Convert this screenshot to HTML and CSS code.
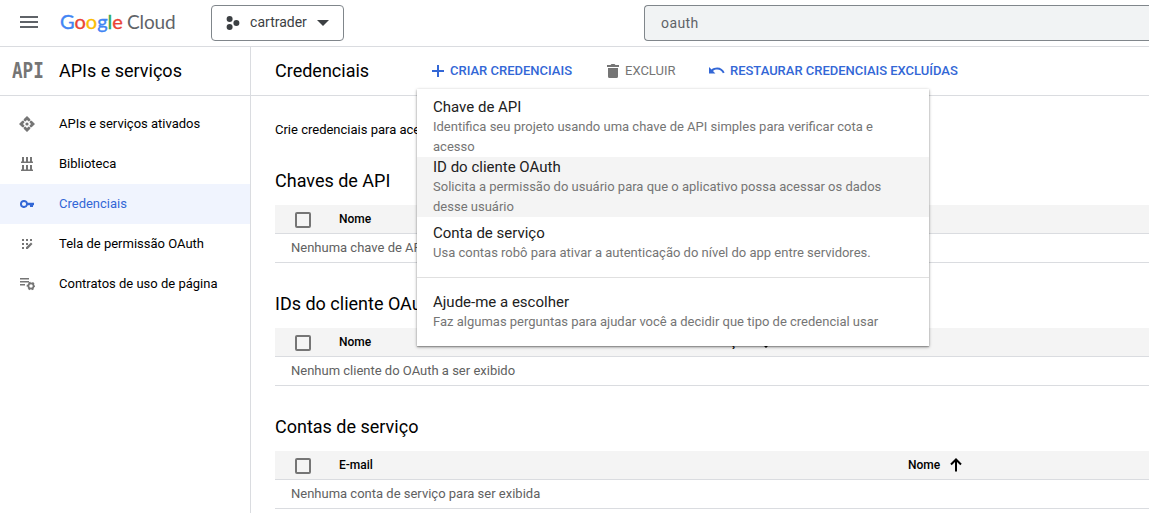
FILE: index.html
```html
<!DOCTYPE html>
<html lang="pt-BR">
<head>
<meta charset="utf-8">
<title>Credenciais – APIs e serviços</title>
<link rel="stylesheet" href="styles.css">
</head>
<body>
<header class="topbar">
  <svg class="burger" width="18" height="12" viewBox="0 0 18 12"><path d="M0 0h18v2H0zM0 5h18v2H0zM0 10h18v2H0z"/></svg>
  <div class="logo"><span class="google"><i class="b">G</i><i class="r">o</i><i class="y">o</i><i class="b">g</i><i class="g">l</i><i class="r">e</i></span><span class="cloud">Cloud</span></div>
  <button class="project">
    <svg width="14" height="14" viewBox="0 0 14 14"><circle cx="3.6" cy="3" r="3"/><circle cx="3.6" cy="11" r="3"/><circle cx="10.4" cy="7" r="3"/></svg>
    <span>cartrader</span>
    <svg class="caret" width="12" height="6" viewBox="0 0 12 6"><path d="M0 0h12L6 6z"/></svg>
  </button>
  <div class="search">oauth</div>
</header>
<div class="layout">
  <aside class="sidebar">
    <div class="product"><span class="api">API</span><span class="product-name">APIs e serviços</span></div>
    <nav class="nav">
      <a class="nav-item"><svg width="16" height="16" viewBox="0 0 16 16"><circle cx="8" cy="8" r="1.600"/><path d="M8 0l3.300 3.300v1.200L9.700 5.600 8 4 6.300 5.600 4.700 4.500V3.300zM8 16l3.300-3.300v-1.200L9.700 10.400 8 12l-1.700-1.600-1.600 1.100v1.200zM0 8l3.300-3.300h1.200l1.100 1.600L4 8l1.600 1.700-1.100 1.600H3.300zM16 8l-3.300-3.300h-1.200l-1.100 1.600L12 8l-1.600 1.700 1.100 1.600h1.200z"/></svg><span>APIs e serviços ativados</span></a>
      <a class="nav-item"><svg width="16" height="16" viewBox="0 0 16 16"><path d="M3 1h2v4.500h2V1h2v4.500h2V1h2v4.500h1V7H2V5.500h1zM3 9h2v4.500h2V9h2v4.500h2V9h2v4.500h1V15H2v-1.500h1z"/></svg><span>Biblioteca</span></a>
      <a class="nav-item active"><svg width="16" height="16" viewBox="0 0 16 16"><path fill-rule="evenodd" d="M5 4a4 4 0 1 0 3.800 5.200H11V11h3V9.200h1V6.800H8.800A4 4 0 0 0 5 4zm0 1.900a2.100 2.100 0 1 1 0 4.200 2.100 2.100 0 0 1 0-4.200z"/></svg><span>Credenciais</span></a>
      <a class="nav-item"><svg width="16" height="16" viewBox="0 0 16 16"><path d="M3 3h2v2H3zM7 3h2v2H7zM11 3h2v2h-2zM3 7h2v2H3zM7 7h2v2H7zM3 11h2v2H3zM7 11.300L12 6.500 13.500 8l-4.800 5H7z"/></svg><span>Tela de permissão OAuth</span></a>
      <a class="nav-item"><svg width="16" height="16" viewBox="0 0 16 16"><path d="M1 2h9v1.600H1zM1 5h9v1.600H1zM1 8h5v1.600H1z"/><circle cx="12" cy="10" r="2.600" fill="none" stroke="#757575" stroke-width="1.700"/><circle cx="12" cy="10" r="3.700" fill="none" stroke="#757575" stroke-width="1.300" stroke-dasharray="2 1.875" stroke-dashoffset="1"/></svg><span>Contratos de uso de página</span></a>
    </nav>
  </aside>
  <main class="main">
    <div class="actionbar">
      <h1>Credenciais</h1>
      <div class="create-wrap">
        <button class="action create"><svg width="12" height="12" viewBox="0 0 12 12"><path d="M5 0h2v5h5v2H7v5H5V7H0V5h5z"/></svg>CRIAR CREDENCIAIS</button>
        <div class="menu">
          <div class="menu-item"><b>Chave de API</b><p>Identifica seu projeto usando uma chave de API simples para verificar cota e acesso</p></div>
          <div class="menu-item hover"><b>ID do cliente OAuth</b><p>Solicita a permissão do usuário para que o aplicativo possa acessar os dados desse usuário</p></div>
          <div class="menu-item short"><b>Conta de serviço</b><p>Usa contas robô para ativar a autenticação do nível do app entre servidores.</p></div>
          <hr>
          <div class="menu-item short"><b>Ajude-me a escolher</b><p>Faz algumas perguntas para ajudar você a decidir que tipo de credencial usar</p></div>
        </div>
      </div>
      <button class="action delete"><svg width="12" height="14" viewBox="0 0 12 14"><path d="M0 1h3.500l1-1h3l1 1H12v2H0zM1 4h10v8.500Q11 14 9.500 14h-7Q1 14 1 12.500z"/></svg>EXCLUIR</button>
      <button class="action restore"><svg width="16" height="8" viewBox="0 0 16 8"><path d="M0 0l2.600 2.500C4 1.300 6 .6 8.200.6c3.400 0 6.200 2 7.400 5l-1.700.7C12.900 4 10.800 2.600 8.200 2.600c-1.600 0-3 .5-4.200 1.300L6.400 6.500H0z"/></svg>RESTAURAR CREDENCIAIS EXCLUÍDAS</button>
    </div>
    <div class="content">
      <p class="intro">Crie credenciais para ace</p>
      <section>
        <h2>Chaves de API</h2>
        <div class="thead"><span class="check"></span><span class="first">Nome</span></div>
        <div class="row">Nenhuma chave de API</div>
      </section>
      <section>
        <h2>IDs do cliente OAuth</h2>
        <div class="thead"><span class="check"></span><span class="first oauth">Nome</span><span>Data da criação</span><svg class="sort down" width="12" height="14" viewBox="0 0 12 14"><path d="M6 13.500V2M1 6.500L6 1.500l5 5"/></svg></div>
        <div class="row">Nenhum cliente do OAuth a ser exibido</div>
      </section>
      <section>
        <h2>Contas de serviço</h2>
        <div class="thead"><span class="check"></span><span class="first accounts">E-mail</span><span>Nome</span><svg class="sort" width="12" height="14" viewBox="0 0 12 14"><path d="M6 13.500V2M1 6.500L6 1.500l5 5"/></svg></div>
        <div class="row">Nenhuma conta de serviço para ser exibida</div>
      </section>
    </div>
  </main>
</div>
</body>
</html>
```
FILE: styles.css
```css
* { box-sizing: border-box; }
body { margin: 0; height: 513px; overflow: hidden; background: #fff; color: #000; font: 13px/20px Roboto, sans-serif; }
button { font: inherit; border: 0; background: none; padding: 0; display: flex; align-items: center; white-space: nowrap; }
h1, h2, p { margin: 0; font-weight: 400; }
svg { flex: none; fill: currentColor; }

.topbar { height: 47px; display: flex; align-items: center; border-bottom: 1px solid #dadce0; padding-left: 20px; }
.burger { color: #5f6368; margin-top: -2px; }
.logo { display: flex; align-items: baseline; margin: -3px 0 0 22px; width: 151px; font: 20px/28px Lato, sans-serif; white-space: nowrap; }
.logo i { font-style: normal; }
.google { width: 67px; -webkit-text-stroke: .35px; }
.cloud { color: #5f6368; font-size: 19px; letter-spacing: -.15px; }
.b { color: #4285f4; }
.r { color: #ea4335; }
.y { color: #fbbc04; }
.g { color: #34a853; }
.project { width: 133px; height: 36px; border: 1px solid #80868b; border-radius: 4px; padding-left: 14px; color: #3c4043; font-size: 14px; }
.project span { margin: -2px 0 0 10px; width: 57px; }
.caret { margin-left: 10px; }
.search { margin-left: 300px; flex: 1; height: 36px; border: 1px solid #80868b; border-right: 0; border-radius: 4px 0 0 4px; background: #f1f3f4; color: #5f6368; padding-left: 16px; font-size: 14px; line-height: 34px; letter-spacing: .4px; }

.layout { display: flex; height: 466px; }
.sidebar { width: 251px; border-right: 1px solid #dadce0; }
.product { height: 49px; display: flex; align-items: center; border-bottom: 1px solid #dadce0; padding-left: 12px; }
.api { width: 47px; color: #757575; font: bold 22px/20px "DejaVu Sans Mono", monospace; transform: scaleX(.8); transform-origin: left; }
.product-name { font-size: 18px; }
.nav { padding-top: 8px; }
.nav-item { height: 40px; display: flex; align-items: center; padding-left: 19px; }
.nav-item svg { color: #757575; margin-right: 24px; }
.nav-item.active { background: #f0f4fe; color: #3367d6; }
.nav-item.active svg { color: #3367d6; }

.main { flex: 1; min-width: 0; }
.actionbar { height: 49px; display: flex; align-items: center; border-bottom: 1px solid #dadce0; padding-left: 24px; }
h1 { font-size: 18px; width: 157px; }
.action { font-weight: 500; color: #3367d6; height: 36px; }
.create-wrap { position: relative; width: 175px; }
.create svg { margin-right: 6px; }
.delete { color: #757575; font-weight: 400; width: 102px; }
.delete svg { margin-right: 6px; }
.restore { letter-spacing: -.02px; }
.restore svg { margin-right: 5px; }

.menu { position: absolute; left: -15px; top: 36px; width: 512px; padding: 8px 0; background: #fff; box-shadow: 0 1px 3px rgba(0,0,0,.4), 0 1px 1px rgba(0,0,0,.2); z-index: 2; }
.menu-item { padding: 0 16px; }
.menu-item.short { padding: 6px 16px; }
.menu-item.hover { background: #f4f4f4; }
.menu-item b { display: block; font-weight: 400; font-size: 15px; color: #212121; }
.menu-item p { color: #757575; }
.menu hr { border: 0; height: 1px; margin: 8px 0; background: #e0e0e0; }

.content { padding: 24px 0 0 24px; }
.intro { margin-bottom: 29px; }
section { margin-bottom: 29px; }
h2 { font-size: 18px; line-height: 24px; margin-bottom: 12px; }
.thead { height: 29px; display: flex; align-items: center; background: #f4f4f4; border-bottom: 1px solid #dadce0; padding-left: 20px; font-size: 12px; font-weight: 500; }
.check { width: 16px; height: 16px; border: 2px solid #757575; border-radius: 2px; margin-top: 2px; }
.first { margin-left: 28px; }
.first.oauth { width: 327px; }
.first.accounts { width: 569px; }
.sort { margin-left: 10px; fill: none; stroke: #000; stroke-width: 2; }
.sort.down { transform: rotate(180deg); margin-top: -3px; }
.row { height: 29px; line-height: 28px; border-bottom: 1px solid #dadce0; padding-left: 16px; color: #616161; }
```
